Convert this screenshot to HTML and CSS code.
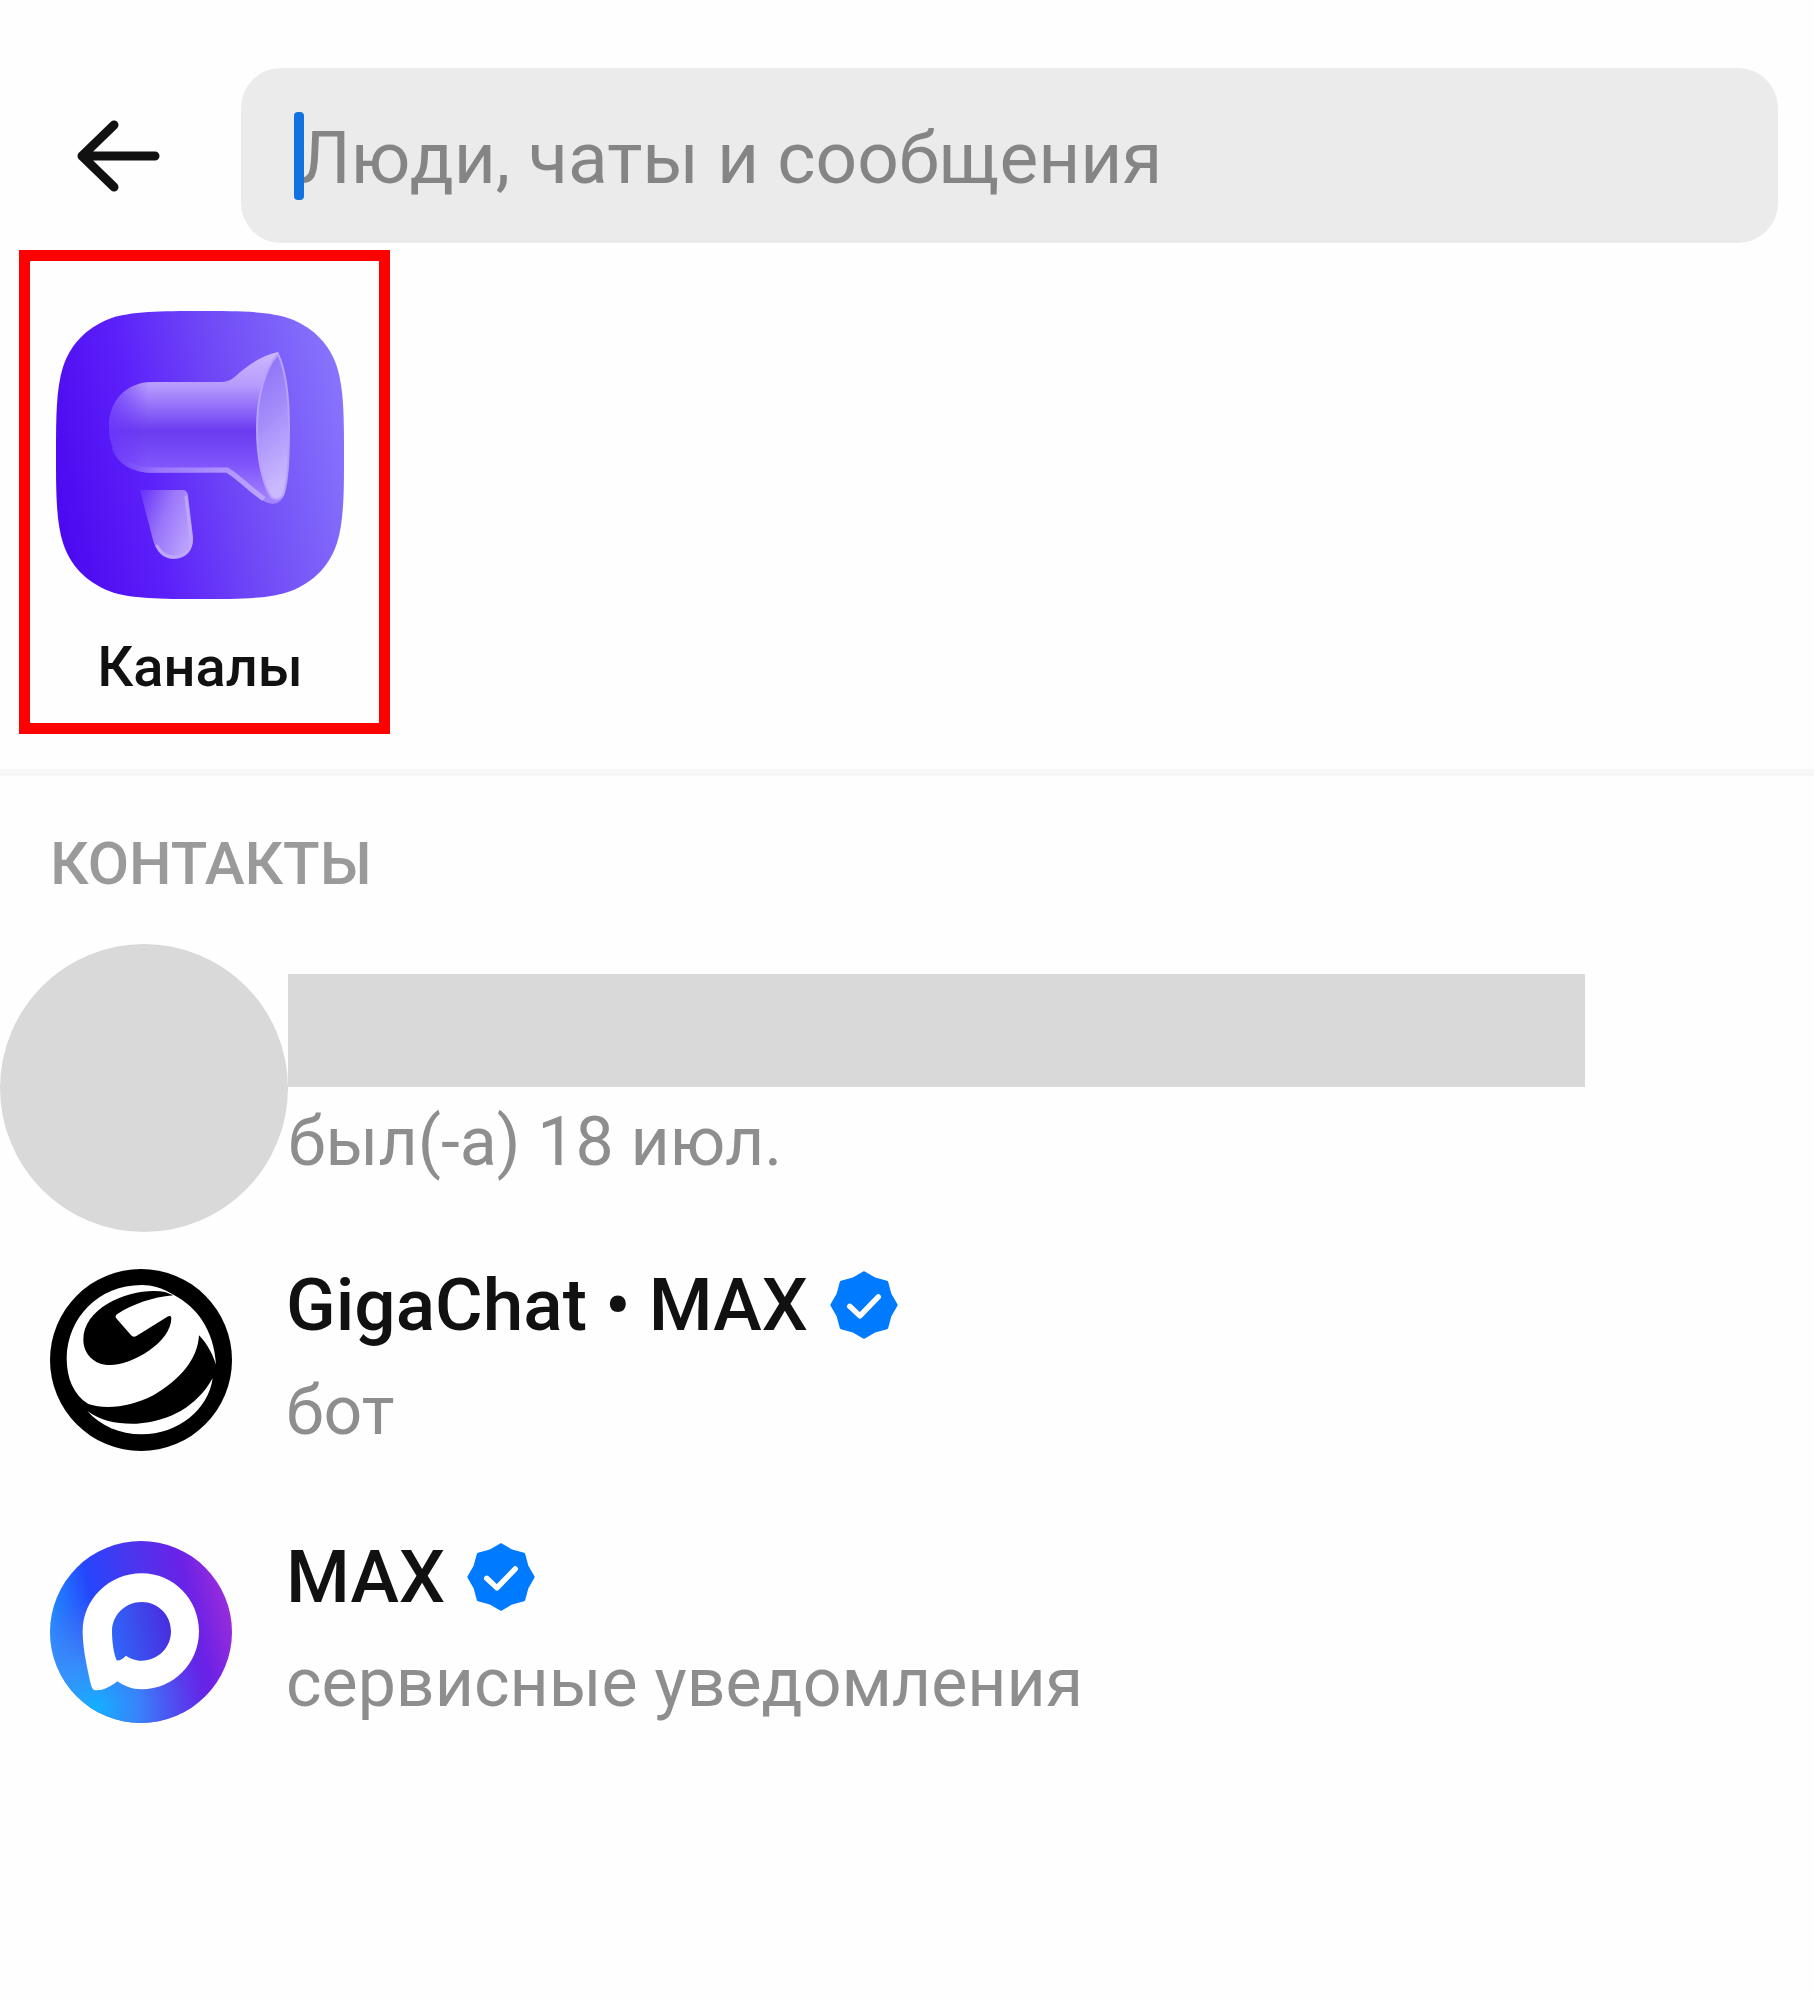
FILE: index.html
```html
<!DOCTYPE html>
<html lang="ru">
<head>
    <meta charset="UTF-8">
    <meta name="viewport" content="width=device-width, initial-scale=1.0">
    <title>Поиск</title>
    <link rel="stylesheet" href="styles.css">
</head>
<body>
    <header class="search-bar">
        <button class="back-btn" type="button" aria-label="Назад">
            <svg viewBox="0 0 84 76" fill="none" stroke="#111" stroke-width="9" stroke-linecap="round" stroke-linejoin="round">
                <path d="M79 38H6M38 7L6 38l32 31"/>
            </svg>
        </button>
        <div class="search-field">
            <input type="text" id="search" placeholder="Люди, чаты и сообщения" aria-label="Поиск">
            <span class="caret"></span>
        </div>
    </header>

    <section class="shortcuts">
        <a href="#channels" class="shortcut">
            <svg class="shortcut-icon" viewBox="0 0 288 288">
                <defs>
                    <linearGradient id="tile" x1="0" y1="0.6" x2="1" y2="0.4">
                        <stop offset="0" stop-color="#4c0af0"/>
                        <stop offset="0.3" stop-color="#5c20fa"/>
                        <stop offset="0.6" stop-color="#6f48f6"/>
                        <stop offset="1" stop-color="#8672fc"/>
                    </linearGradient>
                    <linearGradient id="horn" x1="0" y1="0" x2="0" y2="1">
                        <stop offset="0" stop-color="#cdb8ff"/>
                        <stop offset="0.22" stop-color="#b79bfc"/>
                        <stop offset="0.35" stop-color="#9673fa"/>
                        <stop offset="0.52" stop-color="#6a3bf0"/>
                        <stop offset="0.75" stop-color="#8056fb"/>
                        <stop offset="1" stop-color="#a888ff"/>
                    </linearGradient>
                    <linearGradient id="bell" x1="0" y1="0" x2="0.2" y2="1">
                        <stop offset="0" stop-color="#8a6cf8"/>
                        <stop offset="0.5" stop-color="#a58dfa"/>
                        <stop offset="1" stop-color="#cbb8ff"/>
                    </linearGradient>
                    <linearGradient id="edge" x1="0" y1="0" x2="1" y2="0">
                        <stop offset="0" stop-color="#6a38f8"/>
                        <stop offset="0.3" stop-color="#9a76fc"/>
                        <stop offset="1" stop-color="#bda6ff"/>
                    </linearGradient>
                    <linearGradient id="shade" x1="0" y1="0" x2="1" y2="0">
                        <stop offset="0" stop-color="#6a34fa" stop-opacity="0.8"/>
                        <stop offset="0.35" stop-color="#6a34fa" stop-opacity="0"/>
                    </linearGradient>
                    <linearGradient id="grip" x1="0" y1="0" x2="1" y2="0.5">
                        <stop offset="0" stop-color="#6530f8"/>
                        <stop offset="0.5" stop-color="#9874fb"/>
                        <stop offset="1" stop-color="#b89ffc"/>
                    </linearGradient>
                </defs>
                <path fill="url(#tile)" d="M144 0C182 0 214 0 235 8C258 17 274 34 281 56C288 78 288 108 288 144S288 210 281 232C274 254 258 271 235 280C214 288 182 288 144 288S74 288 53 280C30 271 14 254 7 232C0 210 0 180 0 144S0 78 7 56C14 34 30 17 53 8C74 0 106 0 144 0Z"/>
                <path fill="url(#horn)" d="M96 71H165C176 71 180 64 188 58C198 50 209 44 222 41C230 62 234 90 234 118C234 148 232 171 228 184C225 193 216 195 208 190C196 182 184 170 171 162H96C70 162 53 142 53 116S70 71 96 71Z"/>
                <path fill="url(#shade)" d="M96 71H165V162H96C70 162 53 142 53 116S70 71 96 71Z"/>
                <path fill="none" stroke="url(#edge)" stroke-width="5" d="M58 136C64 152 78 159 96 159H171C184 167 196 180 208 188"/>
                <path fill="url(#bell)" stroke="#b8a2ff" stroke-width="2" d="M222 43C208 58 201 88 201 118C201 145 206 172 215 186C220 190 226 188 228 182C232 168 233 145 233 118C233 90 230 60 222 43Z"/>
                <path fill="url(#grip)" d="M84 179H127Q131 179 132 184L137 226C138 240 129 248 118 248C107 248 100 240 97 229Z"/>
                <path fill="none" stroke="#bea8ff" stroke-width="3" stroke-linecap="round" d="M130 186L135 227C136 239 128 246 118 246C110 246 104 241 101 235"/>
            </svg>
            <span class="shortcut-label">Каналы</span>
        </a>
    </section>

    <main class="contacts">
        <h2>КОНТАКТЫ</h2>
        <ul class="contact-list">
            <li class="contact">
                <span class="avatar avatar-hidden"></span>
                <div class="contact-info">
                    <div class="name-hidden"></div>
                    <p class="status">был(-а) 18 июл.</p>
                </div>
            </li>
            <li class="contact">
                <svg class="avatar" viewBox="60 58 546 546">
                    <circle cx="333" cy="331" r="273" fill="#000"/>
                    <path fill="#fff" d="M110 325C112 205 205 106 335 106C366 106 395 114 432 136C500 172 552 240 558 345C548 315 534 285 507 257C503 330 450 390 370 437C305 470 230 482 175 463C130 435 110 385 110 325Z"/>
                    <path fill="#000" d="M405 127C320 110 160 165 160 270C160 310 190 346 240 346C310 346 425 275 424 204C423 198 418 198 412 201L318 260Q308 264 302 255L258 205Q254 199 262 193C310 163 365 143 430 137Z"/>
                    <path fill="#fff" d="M172 484C215 515 265 524 320 522C420 516 500 470 548 386C535 480 445 554 335 554C270 554 210 528 172 484Z"/>
                </svg>
                <div class="contact-info">
                    <div class="name">GigaChat • MAX
                        <svg class="verified" viewBox="0 0 100 100">
                            <path fill="#007aff" stroke="#007aff" stroke-width="5" stroke-linejoin="round" d="M50 3L65.7 12.1L83.2 16.8L87.9 34.3L97 50L87.9 65.7L83.2 83.2L65.7 87.9L50 97L34.3 87.9L16.8 83.2L12.1 65.7L3 50L12.1 34.3L16.8 16.8L34.3 12.1Z"/>
                            <path fill="none" stroke="#fff" stroke-width="8" stroke-linecap="round" stroke-linejoin="round" d="M29 52L44 66L71 38"/>
                        </svg>
                    </div>
                    <p class="status">бот</p>
                </div>
            </li>
            <li class="contact">
                <svg class="avatar" viewBox="60 60 546 546">
                    <defs>
                        <linearGradient id="ring" x1="0" y1="0.65" x2="1" y2="0.4">
                            <stop offset="0" stop-color="#1f9dff"/>
                            <stop offset="0.3" stop-color="#2546fc"/>
                            <stop offset="0.55" stop-color="#4a36ee"/>
                            <stop offset="0.8" stop-color="#6a22e6"/>
                            <stop offset="1" stop-color="#9a2cdc"/>
                        </linearGradient>
                        <radialGradient id="glow" cx="0.25" cy="0.92" r="0.6">
                            <stop offset="0" stop-color="#12b0ff"/>
                            <stop offset="0.4" stop-color="#3a94fa" stop-opacity="0.8"/>
                            <stop offset="1" stop-color="#6a60f0" stop-opacity="0"/>
                        </radialGradient>
                        <linearGradient id="core" x1="0" y1="0.6" x2="1" y2="0.4">
                            <stop offset="0" stop-color="#2f66f8"/>
                            <stop offset="1" stop-color="#4a2ce0"/>
                        </linearGradient>
                    </defs>
                    <circle cx="333" cy="333" r="273" fill="url(#ring)"/>
                    <circle cx="333" cy="333" r="273" fill="url(#glow)"/>
                    <path fill="#fff" d="M335 157C430 157 507 234 507 331S430 505 335 505C305 505 283 495 262 481C245 494 225 508 200 508C188 508 185 500 182 488C170 435 158 380 158 331C158 234 238 157 335 157Z"/>
                    <path fill="url(#core)" d="M335 243C384 243 423 282 423 331S384 419 335 419C315 419 300 412 288 404C278 414 268 420 260 418C252 400 246 365 246 331C246 282 286 243 335 243Z"/>
                </svg>
                <div class="contact-info">
                    <div class="name">MAX
                        <svg class="verified" viewBox="0 0 100 100">
                            <path fill="#007aff" stroke="#007aff" stroke-width="5" stroke-linejoin="round" d="M50 3L65.7 12.1L83.2 16.8L87.9 34.3L97 50L87.9 65.7L83.2 83.2L65.7 87.9L50 97L34.3 87.9L16.8 83.2L12.1 65.7L3 50L12.1 34.3L16.8 16.8L34.3 12.1Z"/>
                            <path fill="none" stroke="#fff" stroke-width="8" stroke-linecap="round" stroke-linejoin="round" d="M29 52L44 66L71 38"/>
                        </svg>
                    </div>
                    <p class="status">сервисные уведомления</p>
                </div>
            </li>
        </ul>
    </main>
</body>
</html>
```
FILE: styles.css
```css
* {
    box-sizing: border-box;
}

body {
    margin: 0;
    background-color: #fefefe;
    color: #111;
    font-family: Roboto, "Liberation Sans", sans-serif;
}

.search-bar {
    display: flex;
    align-items: center;
    gap: 81px;
    padding: 68px 36px 0 76px;
}

.back-btn {
    width: 84px;
    padding: 0;
    border: none;
    background: none;
    cursor: pointer;
}

.back-btn svg {
    display: block;
    width: 100%;
}

.search-field {
    position: relative;
    flex: 1;
}

.search-field input {
    display: block;
    width: 100%;
    height: 175px;
    padding: 4px 58px 0;
    border: none;
    border-radius: 40px;
    outline: none;
    background-color: #ebebeb;
    color: #111;
    font-family: inherit;
    font-size: 73px;
}

.search-field input::placeholder {
    color: #858585;
    opacity: 1;
}

/* text cursor over the first letter */
.caret {
    position: absolute;
    top: 44px;
    left: 53px;
    width: 10px;
    height: 88px;
    border-radius: 4px;
    background-color: #1273e0;
}

.shortcuts {
    padding: 7px 19px 35px;
    border-bottom: 7px solid #f7f7f7;
}

.shortcut {
    display: inline-flex;
    flex-direction: column;
    align-items: center;
    gap: 38px;
    padding: 50px 35px 26px 26px;
    border: 11px solid #ff0000;
    color: #111;
    text-decoration: none;
    vertical-align: top;
}

.shortcut-icon {
    width: 288px;
    height: 288px;
}

.shortcut-label {
    font-size: 56px;
    font-weight: 500;
    line-height: 60px;
}

.contacts h2 {
    margin: 0;
    padding: 52px 50px 52px;
    color: #9a9a9a;
    font-size: 60px;
    font-weight: 500;
    line-height: 72px;
}

.contact-list {
    margin: 0;
    padding: 0;
    list-style: none;
}

.contact {
    display: flex;
    align-items: center;
    gap: 54px;
    height: 272px;
    padding-left: 50px;
}

.contact:has(.avatar-hidden) {
    gap: 0;
    padding-left: 0;
}

.avatar {
    flex: none;
    width: 182px;
    height: 182px;
}

.avatar-hidden {
    width: 288px;
    height: 288px;
    border-radius: 50%;
    background-color: #d9d9d9;
}

.contact-info {
    flex: 1;
    padding-bottom: 10px;
}

.name {
    display: flex;
    align-items: center;
    gap: 22px;
    font-size: 73px;
    font-weight: 500;
    line-height: 112px;
}

.name-hidden {
    width: 85%;
    height: 113px;
    margin-bottom: 5px;
    background-color: #d9d9d9;
}

.verified {
    width: 68px;
    height: 68px;
}

.status {
    margin: 0;
    color: #8e8e8e;
    font-size: 68px;
    line-height: 100px;
}
```
